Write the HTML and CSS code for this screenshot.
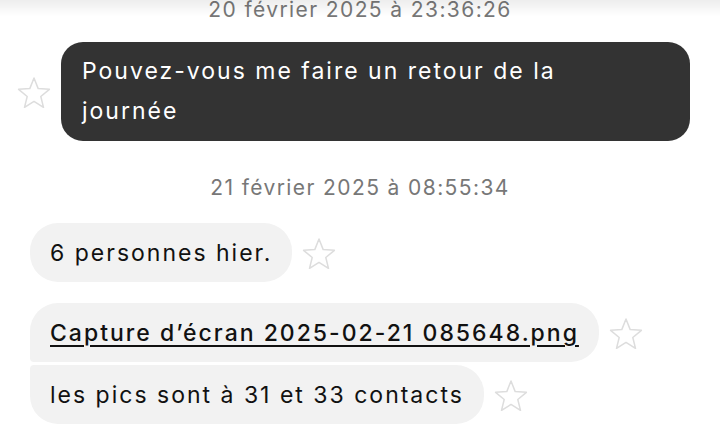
FILE: index.html
```html
<!DOCTYPE html>
<html lang="fr">
<head>
  <meta charset="UTF-8" />
  <title>Conversation</title>
  <link rel="stylesheet" href="styles.css">
</head>
<body>
  <div class="chat">
    <div class="stamp first">20 février 2025 à 23:36:26</div>

    <div class="row out">
      <svg class="star" viewBox="0 0 34 32"><path d="M17 2 L21.2 12.6 L32.4 13.3 L23.8 20.5 L26.5 31.4 L17 25.4 L7.5 31.4 L10.2 20.5 L1.6 13.3 L12.8 12.6 Z"/></svg>
      <div class="bubble dark">Pouvez-vous me faire un retour de la<br>journée</div>
    </div>

    <div class="stamp">21 février 2025 à 08:55:34</div>

    <div class="row in">
      <div class="bubble light">6 personnes hier.</div>
      <svg class="star" viewBox="0 0 34 32"><path d="M17 2 L21.2 12.6 L32.4 13.3 L23.8 20.5 L26.5 31.4 L17 25.4 L7.5 31.4 L10.2 20.5 L1.6 13.3 L12.8 12.6 Z"/></svg>
    </div>

    <div class="row in group-top">
      <div class="bubble light join-bottom"><a href="#" class="file">Capture d’écran 2025-02-21 085648.png</a></div>
      <svg class="star" viewBox="0 0 34 32"><path d="M17 2 L21.2 12.6 L32.4 13.3 L23.8 20.5 L26.5 31.4 L17 25.4 L7.5 31.4 L10.2 20.5 L1.6 13.3 L12.8 12.6 Z"/></svg>
    </div>
    <div class="row in group-next">
      <div class="bubble light join-top">les pics sont à 31 et 33 contacts</div>
      <svg class="star" viewBox="0 0 34 32"><path d="M17 2 L21.2 12.6 L32.4 13.3 L23.8 20.5 L26.5 31.4 L17 25.4 L7.5 31.4 L10.2 20.5 L1.6 13.3 L12.8 12.6 Z"/></svg>
    </div>
  </div>
</body>
</html>
```

FILE: styles.css
```css
* {
  box-sizing: border-box;
  margin: 0;
  padding: 0;
}

body {
  background: #fff;
  font-family: 'Inter', sans-serif;
  color: #111;
  overflow: hidden;
}

/* faint shadow from the header above */
body::before {
  content: '';
  position: fixed;
  top: 0;
  left: 0;
  right: 0;
  height: 16px;
  background: linear-gradient(rgba(0, 0, 0, 0.07), rgba(0, 0, 0, 0));
}

.chat {
  display: flex;
  flex-direction: column;
  padding: 0 30px 0 17px;
}

.stamp {
  text-align: center;
  font-size: 21px;
  line-height: 28px;
  letter-spacing: 1.4px;
  color: #777;
  margin: 33px 0 21px;
  padding-left: 13px;
}

.stamp.first {
  margin: -4px 0 18px;
}

.row {
  display: flex;
  align-items: center;
  gap: 10px;
}

.row.in {
  padding-left: 13px;
  margin-bottom: 21px;
}

.row.in.group-top {
  margin-bottom: 3px;
}

.bubble {
  font-size: 23px;
  line-height: 40px;
  letter-spacing: 2px;
  padding: 10px 20px 9px;
  border-radius: 28px;
}

.bubble.dark {
  background: #333;
  color: #fff;
  flex: 1;
  padding: 9px 21px 10px;
  border-radius: 22px;
}

.bubble.light {
  background: #f2f2f2;
}

.bubble.join-bottom {
  border-bottom-left-radius: 4px;
}

.bubble.join-top {
  border-top-left-radius: 4px;
}

.file {
  color: #111;
  font-weight: 500;
  text-decoration: underline;
  text-decoration-thickness: 2px;
  text-underline-offset: 4px;
}

.star {
  width: 34px;
  height: 32px;
  flex-shrink: 0;
  fill: none;
  stroke: #ddd;
  stroke-width: 1.5;
  stroke-linejoin: round;
}
```
